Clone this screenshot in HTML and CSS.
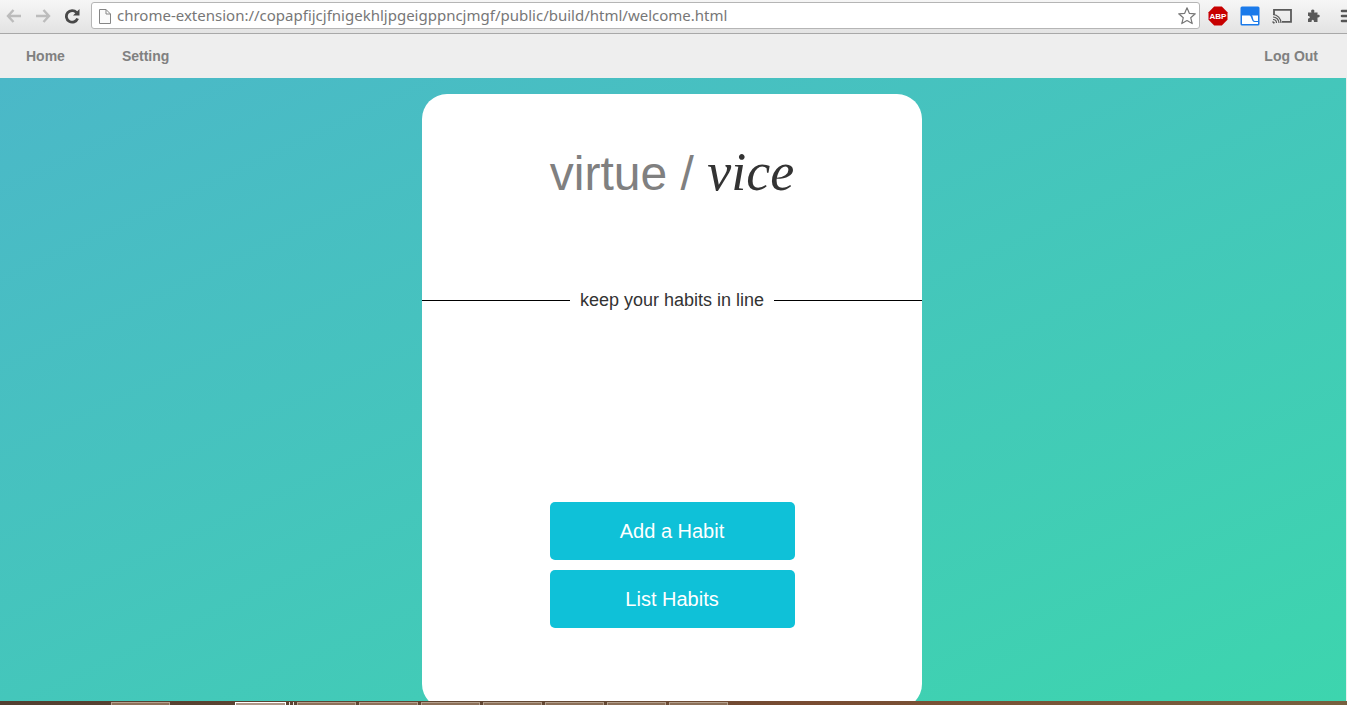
FILE: index.html
```html
<!DOCTYPE html>
<html lang="en">
<head>
<meta charset="utf-8">
<title>virtue / vice</title>
<link rel="stylesheet" href="styles.css">
</head>
<body>
<header class="toolbar">
  <button class="tool" aria-label="Back"><svg width="16" height="16" viewBox="0 0 16 16" fill="none" stroke="#bcbcbc" stroke-width="2.400"><path d="M7.500 2 2 8l5.500 6M2 8h13"/></svg></button>
  <button class="tool" aria-label="Forward"><svg width="16" height="16" viewBox="0 0 16 16" fill="none" stroke="#bcbcbc" stroke-width="2.400"><path d="m8.500 2 5.500 6-5.500 6M14 8H1"/></svg></button>
  <button class="tool" aria-label="Reload"><svg width="16" height="16" viewBox="0 0 16 16"><path d="M12.500 4.500A5.800 5.800 0 1 0 13.600 10.500" fill="none" stroke="#484848" stroke-width="2.800"/><path d="M15.500 1v6.500H9z" fill="#484848"/></svg></button>
  <div class="omnibox">
    <svg width="12" height="16" viewBox="0 0 12 16" fill="#fafafa" stroke="#858585"><path d="M.5 1.500h6.500l4.500 4.500v9.500H.5zM7 1.500V6h4.500"/></svg>
    <input class="url" type="text" aria-label="Address" value="chrome-extension://copapfijcjfnigekhljpgeigppncjmgf/public/build/html/welcome.html">
    <button class="star" aria-label="Bookmark"><svg width="18" height="18" viewBox="0 0 18 18" fill="#fff" stroke="#777" stroke-width="1.200" stroke-linejoin="round"><path d="m9 .8 2.300 5.500 6 .5-4.600 3.900 1.500 5.900L9 13.500l-5.200 3.100 1.500-5.900L.7 6.800l6-.5z"/></svg></button>
  </div>
  <div class="extensions">
    <button class="tool" aria-label="Adblock Plus"><svg width="20" height="20" viewBox="0 0 20 20"><path d="M6.200.5h7.600l5.700 5.700v7.600l-5.700 5.700H6.200L.5 13.800V6.200z" fill="#c70000"/><text class="abp" x="10" y="13" text-anchor="middle">ABP</text></svg></button>
    <button class="tool" aria-label="Habit extension"><svg width="20" height="20" viewBox="0 0 20 20"><rect x=".5" y=".5" width="19" height="19" rx="1.500" fill="#1a7aea"/><path d="M2 9.500h7.500c2 0 2 6.500 5 6.500H18v2H2z" fill="#fff"/><path d="M11.500 9.500H18V15h-3c-2.500 0-1.500-5.500-3.500-5.500z" fill="#fff"/></svg></button>
    <button class="tool" aria-label="Cast"><svg width="20" height="16" viewBox="0 0 20 16" fill="none" stroke="#5a5a5a"><path d="M2 7V1.800h17v12h-9" stroke-width="1.800"/><path d="M1 9a6 6 0 0 1 6 6M1 6.500A8.500 8.500 0 0 1 9 15M1 11.500A3.500 3.500 0 0 1 4.500 15" stroke-width="1.200"/><path d="M1 13.500 2.500 15H1z" fill="#5a5a5a"/></svg></button>
    <button class="tool" aria-label="Extensions"><svg width="20" height="16" viewBox="0 0 20 16"><path d="M4 4.500h3.500C6.500 2.500 7.500 1.500 8.800 1.500S11 2.500 10 4.500h3.500V7c3-1 3 3.200 0 2.500V14h-3.500c0-3-2.500-3-2.500 0H4v-3.500c2.500 0 2.500-2.500 0-2.500z" fill="#5a5a5a"/></svg></button>
    <button class="tool menu" aria-label="Menu"><svg width="16" height="14" viewBox="0 0 16 14" stroke="#555" stroke-width="2.600" stroke-linecap="round"><path d="M3 2h12M3 7h12M3 12h12"/></svg></button>
  </div>
</header>
<nav class="nav">
  <a class="link" href="#home">Home</a>
  <a class="link" href="#setting">Setting</a>
  <button class="link logout">Log Out</button>
</nav>
<main class="page">
  <section class="card">
    <h1 class="title">virtue / <em class="vice">vice</em></h1>
    <p class="tagline">keep your habits in line</p>
    <div class="actions">
      <button class="action">Add a Habit</button>
      <button class="action">List Habits</button>
    </div>
  </section>
</main>
<footer class="taskbar">
  <span class="task"></span>
  <span class="task current"></span><span class="stack"></span><span class="stack"></span>
  <span class="task"></span><span class="task"></span><span class="task"></span><span class="task"></span><span class="task"></span><span class="task"></span><span class="task"></span>
</footer>
</body>
</html>
```
FILE: styles.css
```css
* { box-sizing: border-box; }
body {
  margin: 0;
  height: 100vh;
  display: flex;
  flex-direction: column;
  overflow: hidden;
  font-family: Arial, "Liberation Sans", sans-serif;
  background: #eee;
}
button {
  border: 0;
  padding: 0;
  background: none;
  font-family: inherit;
  cursor: pointer;
}
svg { display: block; flex: none; }
.toolbar {
  flex: none;
  display: flex;
  align-items: center;
  gap: 13px;
  height: 34px;
  padding: 0 1px 2px 6px;
  background: linear-gradient(#f6f6f6, #e3e3e3);
  border-bottom: 1px solid #a8a8a8;
  overflow: hidden;
}
.tool { flex: none; }
.omnibox {
  flex: 1;
  display: flex;
  align-items: center;
  gap: 6px;
  height: 27px;
  margin-left: -2px;
  padding: 0 3px 0 7px;
  background: #fff;
  border: 1px solid #b5b5b5;
  border-radius: 3px;
}
.url {
  flex: 1;
  min-width: 0;
  border: 0;
  padding: 0 0 2px;
  outline: 0;
  background: none;
  color: #777;
  font: 15px "Noto Sans", "Open Sans", sans-serif;
}
.extensions {
  flex: none;
  display: flex;
  align-items: center;
  gap: 12px;
  margin-left: -5px;
}
.menu { margin: 0 -9px 0 3px; }
.abp { font: bold 8px "Liberation Sans", sans-serif; fill: #fff; }
.nav {
  flex: none;
  display: flex;
  align-items: center;
  gap: 57px;
  height: 44px;
  padding: 0 29px 0 26px;
  background: #eee;
}
.link {
  color: #808080;
  font-size: 14px;
  font-weight: bold;
  line-height: 20px;
  text-decoration: none;
}
.logout { margin-left: auto; }
.page {
  flex: 1;
  min-height: 0;
  margin-right: 1px;
  padding: 16px 17px 0 15px;
  overflow: hidden;
  background: linear-gradient(to bottom right, #4bb8c8, #3dd5ae);
}
.card {
  display: flex;
  flex-direction: column;
  align-items: center;
  max-width: 500px;
  margin: 0 auto;
  padding: 46px 0 81px;
  background: #fff;
  border-radius: 25px;
}
.title {
  margin: 0;
  color: #808080;
  font-size: 48px;
  font-weight: normal;
  line-height: 64px;
}
.vice {
  color: #333;
  font-family: Georgia, "Liberation Serif", serif;
  font-size: 54px;
}
.tagline {
  display: flex;
  align-items: center;
  gap: 10px;
  width: 100%;
  margin: 84px 0 192px;
  color: #333;
  font-size: 18px;
  line-height: 20px;
}
.tagline::before,
.tagline::after {
  content: "";
  flex: 1;
  height: 1px;
  background: #000;
}
.actions {
  display: grid;
  gap: 10px;
  width: 49%;
}
.action {
  height: 58px;
  border-radius: 5px;
  background: #0fc1d8;
  color: #fff;
  font-size: 20px;
}
.taskbar {
  flex: none;
  display: flex;
  gap: 3px;
  height: 4px;
  padding: 1px 0 0 111px;
  background: linear-gradient(90deg, #523f31, #654832 45%, #794c32 60%, #76603f);
  overflow: hidden;
}
.task {
  flex: none;
  width: 59px;
  height: 6px;
  background: #8c7059;
  border: 1px solid #b4a08d;
}
.current {
  width: 51px;
  margin-left: 62px;
  background: #ad9788;
  border-color: #fff;
}
.stack {
  width: 1px;
  background: #e5ddd5;
}
```
